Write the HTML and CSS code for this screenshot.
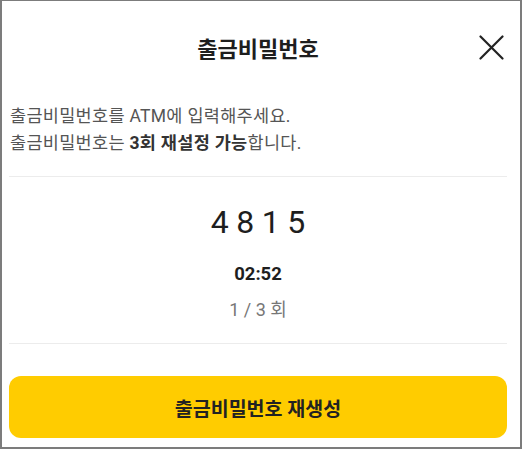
FILE: index.html
```html
<!DOCTYPE html>
<html lang="ko">
<head>
    <meta charset="UTF-8">
    <meta name="viewport" content="width=device-width, initial-scale=1.0">
    <title>출금비밀번호</title>
    <link rel="stylesheet" href="styles.css">
</head>
<body>
    <div class="sheet">
        <header class="sheet-header">
            <span></span>
            <h1>출금비밀번호</h1>
            <button class="close-btn" type="button" aria-label="닫기">
                <svg width="25" height="25" viewBox="0 0 25 25">
                    <path d="M1.5 1.5 L23.5 23.5 M23.5 1.5 L1.5 23.5" stroke="#222" stroke-width="2.2" stroke-linecap="round" fill="none"/>
                </svg>
            </button>
        </header>

        <div class="notice">
            <p>출금비밀번호를 ATM에 입력해주세요.</p>
            <p>출금비밀번호는 <b>3회 재설정 가능</b>합니다.</p>
        </div>

        <div class="code-box">
            <div class="code">4815</div>
            <div class="timer">02:52</div>
            <div class="count">1 / 3 회</div>
        </div>

        <button class="regen-btn" type="button">출금비밀번호 재생성</button>
    </div>
</body>
</html>
```

FILE: styles.css
```css
/* withdrawal pin sheet */
body { margin: 0; background: #fff; font-family: Roboto, "Noto Sans CJK KR", sans-serif; color: #222; }
.sheet { box-sizing: border-box; width: 522px; height: 449px; border: 2px solid #7c7c7c; border-top-width: 1px; padding: 0 13px 0 7px; display: flex; flex-direction: column; }

.sheet-header { height: 92px; display: grid; grid-template-columns: 1fr auto 1fr; align-items: center; }
.sheet-header h1 { margin: 0; font-size: 22px; font-weight: 700; color: #1e1e1e; }
.close-btn { justify-self: end; margin-right: 3px; padding: 0; border: none; background: none; width: 25px; height: 25px; display: flex; cursor: pointer; }

.notice { padding: 10px 1px 0; height: 73px; border-bottom: 1px solid #ececec; }
.notice p { margin: 0; font-size: 17.5px; line-height: 27px; letter-spacing: 0.3px; color: #555; }
.notice b { color: #333; font-weight: 700; }

.code-box { display: flex; flex-direction: column; align-items: center; padding-top: 25px; height: 167px; box-sizing: border-box; border-bottom: 1px solid #ececec; }
.code { font-size: 32px; line-height: 40px; letter-spacing: 7.5px; padding-left: 7.5px; color: #1e1e1e; }
.timer { margin-top: 20px; font-size: 18.5px; font-weight: 700; line-height: 24px; color: #1e1e1e; }
.count { margin-top: 12px; font-size: 18px; line-height: 24px; color: #777; }

.regen-btn { margin-top: 32px; height: 62px; border: none; border-radius: 12px; background: #ffcc00; font-family: inherit; font-size: 19.5px; font-weight: 700; color: #222; cursor: pointer; }
```
